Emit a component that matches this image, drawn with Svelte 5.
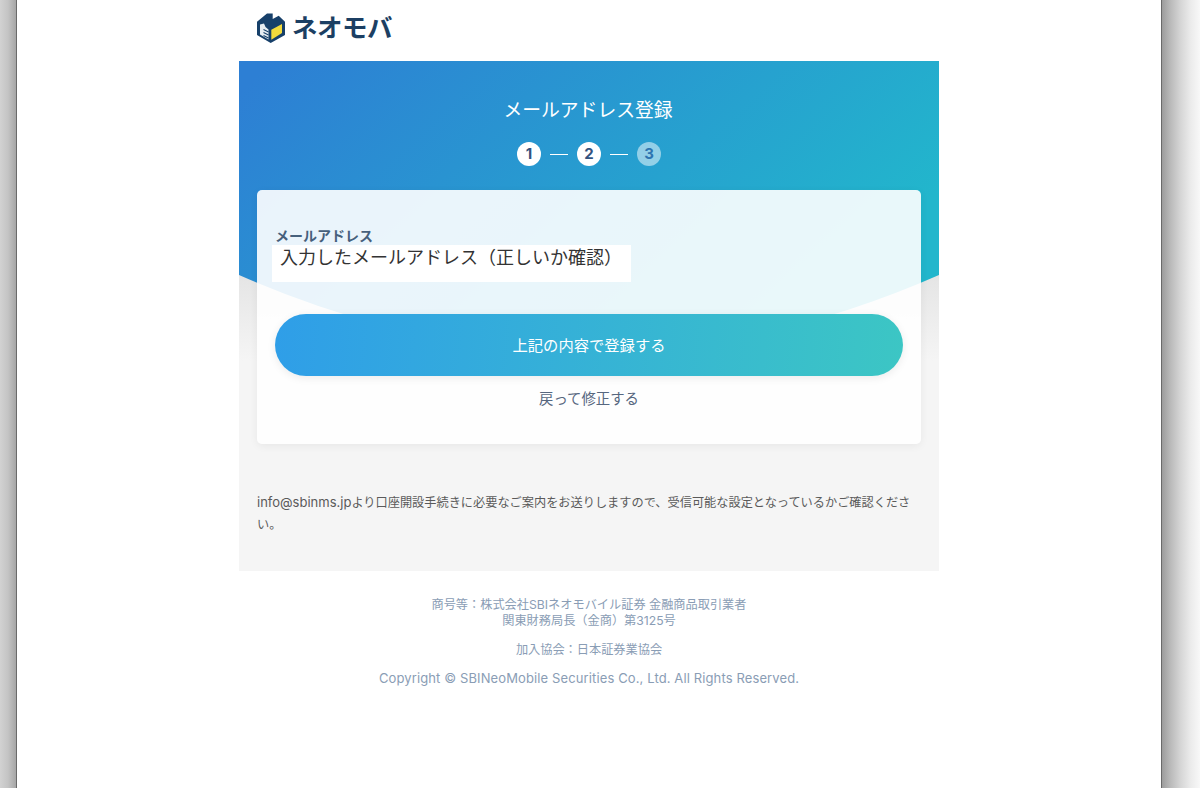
<script>
    let steps = [
        { n: 1, done: true },
        { n: 2, done: true },
        { n: 3, done: false }
    ]
</script>

<div class="frame">
    <div class="window">
        <div class="page">
            <header class="brand">
                <svg class="logo" viewBox="0 0 28 32" width="28" height="32" aria-hidden="true">
                    <path d="M0 9.7 L10 1.5 H15.7 V7 L21.7 3.7 L28 9.7 V23 L13.7 31 L0 23 Z" fill="#17406a"/>
                    <path d="M14.3 17.7 L25 12 V21 L14.3 27.7 Z" fill="#f2da3c"/>
                    <path d="M3 12.5 L7 11.5 L8.5 15 L11.5 17.5 V27.5 L3 22.5 Z" fill="#e6edf2"/>
                    <path d="M6.5 17.5 L11.5 20 M6.5 20.5 L11.5 23 M6.5 23.5 L11.5 26" stroke="#17406a" stroke-width="1.1" fill="none"/>
                </svg>
                <span class="brand-name">ネオモバ</span>
            </header>

            <main class="panel">
                <svg class="hero" viewBox="0 0 700 300" width="700" height="300" aria-hidden="true">
                    <defs>
                        <linearGradient id="heroFill" x1="0" y1="0" x2="1" y2="0.45">
                            <stop offset="0.04" stop-color="#2d7fd4"/>
                            <stop offset="1" stop-color="#22b6cc"/>
                        </linearGradient>
                    </defs>
                    <path d="M0 0 H700 V214 Q350 368 0 214 Z" fill="url(#heroFill)"/>
                </svg>

                <div class="content">
                    <h1>メールアドレス登録</h1>
                    <div class="steps">
                        {#each steps as step, i}
                            {#if i > 0}<span class="dash"></span>{/if}
                            <span class="step" class:todo={!step.done}>{step.n}</span>
                        {/each}
                    </div>

                    <section class="card">
                        <div class="label">メールアドレス</div>
                        <div class="value">入力したメールアドレス（正しいか確認）</div>
                        <button class="submit">上記の内容で登録する</button>
                        <a class="back" href="#back">戻って修正する</a>
                    </section>

                    <p class="note"><span class="latin">info@sbinms.jp</span>より口座開設手続きに必要なご案内をお送りしますので、受信可能な設定となっているかご確認ください。</p>
                </div>
            </main>

            <footer>
                <p>商号等：株式会社SBIネオモバイル証券 金融商品取引業者<br>関東財務局長（金商）第3125号</p>
                <p class="assoc">加入協会：日本証券業協会</p>
                <p class="copy">Copyright © SBINeoMobile Securities Co., Ltd. All Rights Reserved.</p>
            </footer>
        </div>
    </div>
</div>

<style>
    :global(body) {
        margin: 0;
        background: #ffffff;
    }

    /* the window's drop shadow, running the full height on both sides */
    .frame {
        box-sizing: border-box;
        height: 788px;
        padding-left: 16px;
        background: linear-gradient(90deg,
            #d2d2d2 0, #c4c4c4 8px, #a6a6a6 16px,
            #ffffff 16px, #ffffff 1162px,
            #9c9c9c 1162px, #b8b8b8 1170px, #d4d4d4 1180px, #eaeaea 1190px, #f8f8f8 1200px);
    }

    .window {
        box-sizing: border-box;
        width: 1146px;
        height: 788px;
        background: #ffffff;
        border-left: 1px solid #6a6a6a;
        border-right: 1px solid #6a6a6a;
        font-family: Inter, "Noto Sans CJK JP", sans-serif;
    }

    .page {
        width: 700px;
        margin-left: 222px;
    }

    .brand {
        display: flex;
        align-items: center;
        gap: 7px;
        height: 61px;
        padding: 0 0 6px 18px;
        box-sizing: border-box;
    }

    .brand-name {
        font-size: 25.5px;
        font-weight: 700;
        color: #1c3f63;
        line-height: 1;
        letter-spacing: -0.5px;
    }

    .panel {
        position: relative;
        height: 510px;
        background: linear-gradient(180deg, #e4e4e4 210px, #f5f5f5 300px);
        overflow: hidden;
    }

    .hero {
        position: absolute;
        top: 0;
        left: 0;
    }

    .content {
        position: relative;
        padding: 0 18px;
    }

    h1 {
        margin: 0;
        padding-top: 36px;
        padding-right: 2px;
        font-size: 18.8px;
        line-height: 28px;
        font-weight: 400;
        color: #ffffff;
        text-align: center;
    }

    .steps {
        display: flex;
        justify-content: center;
        align-items: center;
        gap: 9px;
        margin-top: 17px;
    }

    .step {
        width: 24px;
        height: 24px;
        border-radius: 50%;
        background: #ffffff;
        color: #33527f;
        font-size: 15px;
        font-weight: 700;
        line-height: 24px;
        text-align: center;
    }

    .step.todo {
        background: rgba(255, 255, 255, 0.5);
        color: #2e74b0;
    }

    .dash {
        width: 18px;
        height: 1px;
        background: #ffffff;
    }

    .card {
        display: flex;
        flex-direction: column;
        margin-top: 24px;
        height: 254px;
        box-sizing: border-box;
        padding: 36px 18px 0;
        border-radius: 5px;
        background: rgba(255, 255, 255, 0.9);
        box-shadow: 0 2px 8px rgba(0, 0, 0, 0.06);
    }

    .label {
        font-size: 14px;
        line-height: 20px;
        font-weight: 700;
        color: #46607c;
    }

    .value {
        align-self: flex-start;
        box-sizing: border-box;
        width: 359px;
        height: 37px;
        margin: -1px 0 0 -3px;
        padding: 0 0 0 8px;
        background: #ffffff;
        font-size: 18px;
        line-height: 25px;
        color: #333333;
        white-space: nowrap;
    }

    .submit {
        height: 62px;
        margin-top: 32px;
        padding: 0 0 2px;
        border: 0;
        border-radius: 31px;
        background: linear-gradient(95deg, #2f9ee8, #3cc6c4);
        box-shadow: 0 2px 8px rgba(0, 0, 0, 0.08);
        color: #ffffff;
        font-family: inherit;
        font-size: 15.3px;
        font-weight: 400;
    }

    .back {
        margin-top: 12px;
        font-size: 14.4px;
        line-height: 22px;
        color: #56677f;
        text-align: center;
        text-decoration: none;
    }

    .note {
        margin: 47px 0 0;
        font-size: 12.2px;
        line-height: 22px;
        color: #5a5a5a;
    }

    .latin {
        font-size: 13px;
    }

    footer {
        padding-top: 26px;
        text-align: center;
        font-size: 12.2px;
        line-height: 16px;
        color: #8a9db5;
    }

    footer p {
        margin: 0 0 13px;
    }

    footer .assoc {
        margin-bottom: 12px;
    }

    footer .copy {
        font-size: 13px;
        letter-spacing: 0.12px;
    }
</style>
